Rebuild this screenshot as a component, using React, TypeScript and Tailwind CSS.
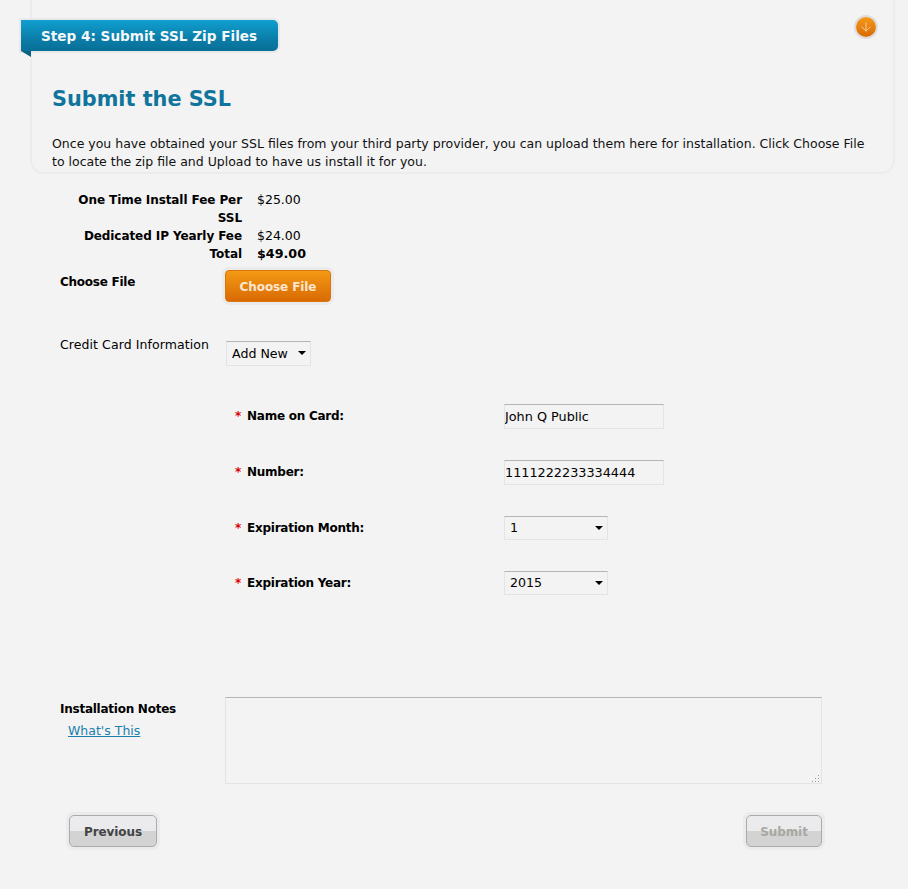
import { ArrowDown } from "lucide-react";

const cardRows = [
  { label: "Name on Card:", value: "John Q Public", kind: "input", mt: "mt-[46px]" },
  { label: "Number:", value: "1111222233334444", kind: "input", mt: "mt-[31px]" },
  { label: "Expiration Month:", value: "1", kind: "select", mt: "mt-[31px]" },
  { label: "Expiration Year:", value: "2015", kind: "select", mt: "mt-[30px]" },
];

const boldLabel = "font-bold text-[12px] tracking-[-0.25px]";
const feeLabel = "text-right font-bold text-[12px] tracking-[-0.08px]";

function Select({ value, className }: { value: string; className: string }) {
  return (
    <div className={"relative " + className}>
      <select
        defaultValue={value}
        className="w-full h-full appearance-none bg-transparent pl-[5px] text-[12.6px] text-black border border-[#e4e4e6] border-t-[#b4b4b8] outline-none"
      >
        <option>{value}</option>
      </select>
      <span className="absolute right-[5px] top-[10px] w-0 h-0 border-x-[4px] border-x-transparent border-t-[4px] border-t-black pointer-events-none" />
    </div>
  );
}

function GrayButton({ label, disabled }: { label: string; disabled?: boolean }) {
  return (
    <button
      className={
        "h-[32px] pt-[1px] rounded-[5px] border border-[#aaaaaa] text-[12px] font-bold tracking-[-0.1px] bg-[linear-gradient(#ebebed_50%,#d3d3d3_50%)] shadow-[0_0_0_3px_#ebebeb] " +
        (disabled ? "w-[76px] text-[#a8a8a0]" : "w-[88px] text-[#444444]")
      }
    >
      {label}
    </button>
  );
}

export default function App() {
  return (
    <div className="w-[908px] h-[889px] overflow-hidden bg-[#f3f3f3] text-[12.5px] leading-[18px] text-black font-['DejaVu_Sans','Liberation_Sans',sans-serif]">
      <div className="relative ml-[30px] mr-[13px] -mt-[12px] h-[186px] border-2 border-[#ececec] rounded-[14px] pl-[20px] pr-[20px] pt-[96px]">
        {/* ribbon */}
        <div className="absolute -left-[11px] top-[30px] w-[257px] h-[31px] rounded-tr-[5px] rounded-br-[5px] bg-[linear-gradient(#109fd0,#0b7ea9_60%,#086f97)] shadow-[0_0_0_2px_#e8e8ea] flex items-center pl-[20px] text-[13.6px] font-bold text-[#f4f8fa]">
          Step 4: Submit SSL Zip Files
        </div>
        <div className="absolute -left-[11px] top-[61px] w-0 h-0 border-l-[10px] border-l-transparent border-t-[6px] border-t-[#0b6285]" />
        {/* collapse toggle */}
        <div className="absolute right-[17px] top-[27px] w-[20px] h-[20px] rounded-full bg-[linear-gradient(#f39a1a,#d96a05)] shadow-[0_0_0_2px_#dddddf] flex items-center justify-center">
          <ArrowDown className="w-[14px] h-[14px] text-[#fbd9b0]" strokeWidth={1.5} />
        </div>
        <h1 className="text-[20.8px] leading-[26px] font-bold text-[#10749c]">Submit the SSL</h1>
        <p className="mt-[23px] text-[12.5px] leading-[18px] text-[#111111] whitespace-nowrap">
          Once you have obtained your SSL files from your third party provider, you can upload them here for installation. Click Choose File
          <br />
          to locate the zip file and Upload to have us install it for you.
        </p>
      </div>

      <div className="mt-[17px] ml-[70px] grid grid-cols-[172px_1fr] gap-x-[15px]">
        <div className={feeLabel}>One Time Install Fee Per SSL</div>
        <div>$25.00</div>
        <div className={feeLabel}>Dedicated IP Yearly Fee</div>
        <div>$24.00</div>
        <div className={feeLabel}>Total</div>
        <div className="font-bold text-[12.7px]">$49.00</div>
      </div>

      <div className="flex ml-[60px] mt-[7px]">
        <div className={"w-[165px] pt-[3px] " + boldLabel}>Choose File</div>
        <button className="w-[106px] h-[32px] pt-[1px] rounded-[4px] border border-[#d9740c] bg-[linear-gradient(#f49a14,#d96a04)] shadow-[0_0_0_3px_#ebebeb] text-[12px] font-bold tracking-[-0.1px] text-[#fbe6d0]">
          Choose File
        </button>
      </div>

      <div className="flex ml-[60px] mt-[34px]">
        <div className="w-[166px] tracking-[0.08px]">Credit Card Information</div>
        <Select value="Add New" className="w-[85px] h-[25px] -mt-[3px] translate-y-[8px]" />
      </div>

      <div className="ml-[235px]">
        {cardRows.map((row) => (
          <div key={row.label} className={"flex h-[25px] " + row.mt}>
            <div className={"w-[269px] pt-[3px] " + boldLabel}>
              <span className="text-[#e00000] mr-[6px]">*</span>
              {row.label}
            </div>
            {row.kind === "input" ? (
              <input
                defaultValue={row.value}
                className="w-[160px] h-[25px] pl-[0px] text-[12.8px] text-black bg-transparent border border-[#e4e4e6] border-t-[#b4b4b8] outline-none"
              />
            ) : (
              <Select value={row.value} className="w-[104px] h-[24px]" />
            )}
          </div>
        ))}
      </div>

      <div className="flex ml-[60px] mt-[101px]">
        <div className="w-[165px] pt-[3px]">
          <div className={boldLabel}>Installation Notes</div>
          <a className="block mt-[4px] ml-[8px] text-[#1a7fae] underline">What's This</a>
        </div>
        <div className="relative w-[597px] h-[87px]">
          <textarea className="block w-full h-full resize-none bg-transparent border border-[#e4e4e6] border-t-[#b4b4b8] outline-none" />
          {/* resize grip */}
          <svg className="absolute right-[2px] bottom-[2px]" width="8" height="7" viewBox="0 0 8 7" fill="#9a9a9a">
            <rect x="6" y="0" width="1" height="1" />
            <rect x="3" y="3" width="1" height="1" />
            <rect x="6" y="3" width="1" height="1" />
            <rect x="0" y="6" width="1" height="1" />
            <rect x="3" y="6" width="1" height="1" />
            <rect x="6" y="6" width="1" height="1" />
          </svg>
        </div>
      </div>

      <div className="flex justify-between ml-[69px] w-[753px] mt-[31px]">
        <GrayButton label="Previous" />
        <GrayButton label="Submit" disabled />
      </div>
    </div>
  );
}
